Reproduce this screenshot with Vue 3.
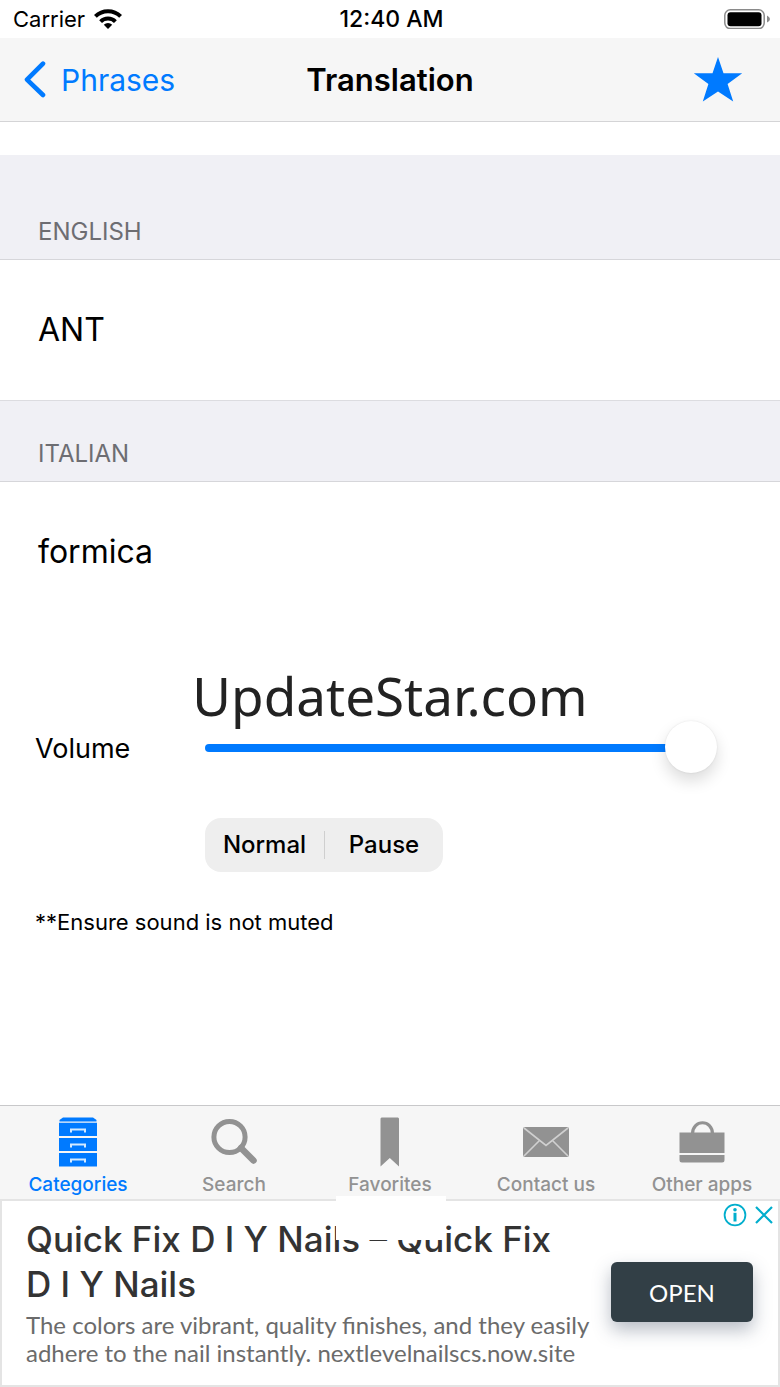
<template>
  <div class="app">
    <header>
      <div class="status-bar">
        <div class="carrier">
          <span>Carrier</span>
          <svg width="28" height="20" viewBox="0 0 28 20" fill="none" stroke="#000" stroke-width="4">
            <path d="M1.4 7.4 A18 18 0 0 1 26.6 7.4" />
            <path d="M6.6 12.6 A10.5 10.5 0 0 1 21.4 12.6" />
            <path d="M14 20 L9.8 15.8 A6 6 0 0 1 18.2 15.8 Z" fill="#000" stroke="none" />
          </svg>
        </div>
        <span class="clock">12:40 AM</span>
        <svg class="battery" width="46" height="20" viewBox="0 0 46 20">
          <rect x="0.8" y="0.8" width="39.4" height="18.8" rx="5.5" fill="#fff" stroke="#8a8a8a" stroke-width="1.5" />
          <rect x="3.5" y="3.2" width="34" height="14" rx="3" fill="#000" />
          <path d="M43 6.5 Q46 8 46 10 Q46 12 43 13.5 Z" fill="#8a8a8a" />
        </svg>
      </div>

      <nav class="nav-bar">
        <button type="button" class="back-button">
          <svg width="24" height="38" viewBox="0 0 24 38" fill="none" stroke="#007aff" stroke-width="4.6" stroke-linecap="round" stroke-linejoin="round">
            <path d="M20 2.6 L4 18.6 L20 34" />
          </svg>
          <span>Phrases</span>
        </button>
        <h1>Translation</h1>
        <button type="button" class="star-button" aria-label="Favorite" @click="isFavorite = !isFavorite">
          <svg width="50" height="46" viewBox="0 0 50 46">
            <path d="M25 0 L30.5 16.3 L49.2 16.3 L34.6 27 L40.2 44.4 L25 34.4 L9.8 44.4 L15.4 27 L0.8 16.3 L19.5 16.3 Z" :fill="isFavorite ? '#007aff' : 'none'" />
          </svg>
        </button>
      </nav>
    </header>

    <main>
      <section v-for="item in phrases" :key="item.language">
        <h2>{{ item.language }}</h2>
        <p class="phrase">{{ item.text }}</p>
      </section>

      <p class="watermark">UpdateStar.com</p>

      <div class="player">
        <label for="volume">Volume</label>
        <input id="volume" v-model.number="volume" type="range" min="0" max="100" />
        <div class="segments">
          <button type="button">Normal</button>
          <button type="button">Pause</button>
        </div>
      </div>
      <p class="note">**Ensure sound is not muted</p>
    </main>

    <nav class="tab-bar">
      <button
        v-for="tab in tabs"
        :key="tab.id"
        type="button"
        class="tab"
        :class="{ active: tab.id === activeTab }"
        @click="activeTab = tab.id"
      >
        <svg v-if="tab.id === 'categories'" width="50" height="50" viewBox="0 0 50 50">
          <path d="M10 0.5 H40 L43.5 3 V4.5 H6.5 V3 Z" fill="currentColor" />
          <path d="M6 5.8 H44 V19 H6 Z M6 21 H44 V34 H6 Z M6 36 H44 V49.5 H6 Z" fill="currentColor" />
          <path d="M18 15.5 V12.5 H32 V15.5 M18 30.5 V27.5 H32 V30.5 M18 45.5 V42.5 H32 V45.5" fill="none" stroke="#d4eaff" stroke-width="2" />
        </svg>
        <svg v-else-if="tab.id === 'search'" width="50" height="50" viewBox="0 0 50 50" fill="none" stroke="currentColor">
          <circle cx="20.5" cy="20" r="15.6" stroke-width="5" />
          <path d="M32 31 L44.5 43.5" stroke-width="6.5" stroke-linecap="round" />
        </svg>
        <svg v-else-if="tab.id === 'favorites'" width="50" height="50" viewBox="0 0 50 50" fill="currentColor">
          <path d="M16.5 0.5 H33 L34 1.5 V49.5 L24.8 41 L15.5 49.5 V1.5 Z" />
        </svg>
        <svg v-else-if="tab.id === 'contact'" width="50" height="50" viewBox="0 0 50 50">
          <rect x="2" y="10" width="46" height="30" rx="2" fill="currentColor" />
          <path d="M3 11 L25 28.5 L47 11 M3 39 L18.5 23.5 M47 39 L31.5 23.5" fill="none" stroke="#d0d0d0" stroke-width="1.6" />
        </svg>
        <svg v-else width="50" height="50" viewBox="0 0 50 50">
          <path d="M15.5 17 C15.5 2 35.5 2 35.5 17" fill="none" stroke="currentColor" stroke-width="3.2" />
          <path d="M2.5 15.5 H47.5 V36 H2.5 Z M2.5 38 H47.5 V43 Q47.5 45.5 45 45.5 H5 Q2.5 45.5 2.5 43 Z" fill="currentColor" />
        </svg>
        <span>{{ tab.label }}</span>
      </button>
    </nav>

    <aside class="ad">
      <div class="ad-patch"></div>
      <div class="ad-copy">
        <h3>Quick Fix D I Y Nails – Quick Fix D&nbsp;I&nbsp;Y&nbsp;Nails</h3>
        <p>The colors are vibrant, quality finishes, and they easily adhere to the nail instantly. nextlevelnailscs.now.site</p>
      </div>
      <button type="button" class="open-button">OPEN</button>
      <div class="ad-controls">
        <button type="button" aria-label="Ad info">
          <svg width="24" height="24" viewBox="0 0 24 24" fill="none" stroke="#00aecd" stroke-width="1.8">
            <circle cx="12" cy="12" r="10.4" />
            <circle cx="12" cy="6.7" r="1.8" fill="#00aecd" stroke="none" />
            <path d="M12 9.8 V18.5" stroke-width="3" />
          </svg>
        </button>
        <button type="button" aria-label="Close ad">
          <svg width="18" height="24" viewBox="0 0 18 24" fill="none" stroke="#00aecd" stroke-width="2.2">
            <path d="M1 4 L17 20 M17 4 L1 20" />
          </svg>
        </button>
      </div>
    </aside>
  </div>
</template>

<script setup>
import { ref } from 'vue'

const isFavorite = ref(true)
const volume = ref(100)
const activeTab = ref('categories')

const phrases = [
  { language: 'ENGLISH', text: 'ANT' },
  { language: 'ITALIAN', text: 'formica' }
]

const tabs = [
  { id: 'categories', label: 'Categories' },
  { id: 'search', label: 'Search' },
  { id: 'favorites', label: 'Favorites' },
  { id: 'contact', label: 'Contact us' },
  { id: 'apps', label: 'Other apps' }
]
</script>

<style>
body {
  margin: 0;
  background-color: #fff;
}
</style>

<style scoped>
.app {
  display: flex;
  flex-direction: column;
  min-height: 100vh;
  font-family: Inter, "Liberation Sans", sans-serif;
  color: #000;
}
h1, h2, h3, p { margin: 0; font-weight: 400; }
svg { display: block; flex-shrink: 0; }
button {
  padding: 0;
  border: none;
  background: none;
  font-family: inherit;
  color: inherit;
  cursor: pointer;
}

/* ステータスバー */
.status-bar {
  display: grid;
  grid-template-columns: 1fr auto 1fr;
  align-items: center;
  height: 38px;
  padding: 0 10px 0 13px;
  font-size: 22px;
}
.carrier { display: flex; align-items: center; gap: 9px; }
.clock { font-size: 23px; font-weight: 500; }
.battery { justify-self: end; }

/* ナビゲーション */
.nav-bar {
  display: grid;
  grid-template-columns: 1fr auto 1fr;
  align-items: center;
  height: 83px;
  padding: 0 23px;
  background-color: #f6f6f6;
  border-bottom: 1px solid #d4d4d6;
}
.back-button {
  display: flex;
  align-items: center;
  gap: 14px;
  color: #007aff;
  font-size: 30px;
}
.nav-bar h1 { font-size: 31px; font-weight: 600; }
.star-button { justify-self: end; padding-right: 14px; }

/* 本文 */
main { flex: 1; padding-top: 33px; }
section h2 {
  padding: 37px 38px 12px;
  background-color: #f0f0f5;
  border-top: 1px solid #dcdce0;
  border-bottom: 1px solid #d6d6da;
  font-size: 24px;
  line-height: 31px;
  color: #6d6d72;
}
section:first-child h2 { padding-top: 60px; border-top-color: #f0f0f5; }
.phrase {
  padding: 50px 38px;
  font-size: 32px;
  line-height: 40px;
}
.watermark {
  padding-top: 48px;
  font-family: "Noto Sans", "Open Sans", sans-serif;
  font-size: 53px;
  line-height: 52px;
  text-align: center;
  color: #222;
}
.player {
  display: grid;
  grid-template-columns: 170px 1fr;
  align-items: center;
  row-gap: 44px;
  padding: 0 63px 0 35px;
}
.player label { font-size: 27px; }
.player input {
  appearance: none;
  width: 100%;
  height: 52px;
  margin: 0;
  background: none;
}
.player input::-webkit-slider-runnable-track {
  height: 8px;
  border-radius: 4px;
  background: linear-gradient(to right, #007aff calc(100% - 26px), transparent 0);
}
.player input::-webkit-slider-thumb {
  appearance: none;
  width: 52px;
  height: 52px;
  margin-top: -23px;
  border-radius: 50%;
  background-color: #fff;
  box-shadow: 0 0 2px rgba(0, 0, 0, 0.1), 0 8px 16px rgba(0, 0, 0, 0.14);
}
.segments {
  grid-column: 2;
  display: flex;
  justify-self: start;
  padding: 13px 0;
  border-radius: 16px;
  background-color: #eee;
}
.segments button {
  width: 119px;
  font-size: 24px;
  font-weight: 500;
  line-height: 28px;
}
.segments button + button { border-left: 1px solid #cfcfcf; }
.note {
  padding: 36px 35px;
  font-size: 22px;
  line-height: 28px;
}

/* タブバー */
.tab-bar {
  display: grid;
  grid-template-columns: repeat(5, 1fr);
  padding: 11px 0 2px;
  background-color: #f6f6f6;
  border-top: 1px solid #c8c8ca;
}
.tab {
  display: flex;
  flex-direction: column;
  align-items: center;
  gap: 6px;
  font-size: 19px;
  font-weight: 500;
  line-height: 24px;
  color: #929292;
}
.tab.active { color: #007aff; }

/* 広告 */
.ad {
  position: relative;
  display: flex;
  align-items: center;
  justify-content: space-between;
  gap: 12px;
  padding: 16px 25px 18px 24px;
  border: 2px solid #e4e4e4;
  font-family: Lato, sans-serif;
}
.ad-patch {
  position: absolute;
  top: -5px;
  left: 43%;
  width: 110px;
  height: 44px;
  background-color: #fff;
}
.ad-copy h3 {
  margin-bottom: 4px;
  font-family: Inter, sans-serif;
  font-size: 35px;
  font-weight: 500;
  line-height: 45px;
  color: #333;
}
.ad-copy p {
  font-size: 24px;
  line-height: 28px;
  color: #6b6b6b;
}
.open-button {
  flex-shrink: 0;
  width: 142px;
  height: 60px;
  border-radius: 6px;
  background-color: #323f46;
  box-shadow: 0 8px 18px rgba(50, 63, 90, 0.35);
  font-size: 24px;
  color: #fff;
}
.ad-controls {
  position: absolute;
  top: 2px;
  right: 5px;
  display: flex;
  gap: 8px;
}
</style>
